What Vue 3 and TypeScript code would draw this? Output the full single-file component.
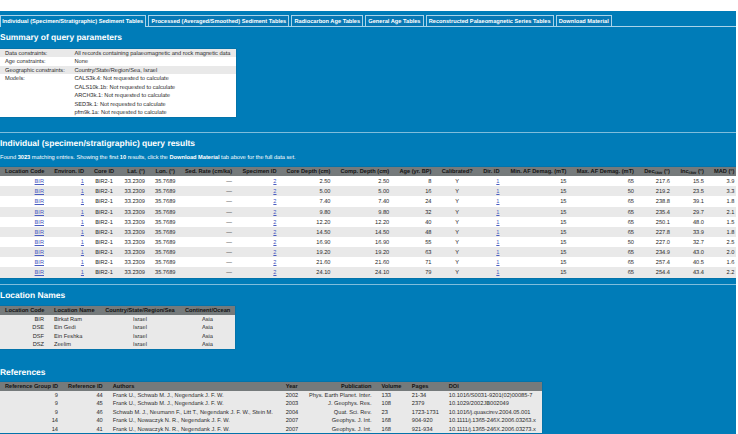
<template>
  <main class="page">
    <nav class="tabs">
      <a
        v-for="tab in tabs"
        :key="tab"
        :class="['tab', { active: tab === activeTab }]"
        href="#"
        @click.prevent="activeTab = tab"
      >{{ tab }}</a>
    </nav>

    <section class="summary">
      <h2>Summary of query parameters</h2>
      <div class="grid summary-table">
        <div v-for="(item, i) in summary" :key="i" class="row">
          <span>{{ item[0] }}</span>
          <span>{{ item[1] }}</span>
        </div>
      </div>
    </section>

    <section class="results">
      <h2>Individual (specimen/stratigraphic) query results</h2>
      <p>
        Found <b>3023</b> matching entries. Showing the first <b>10</b> results, click the
        <b>Download Material</b> tab above for the full data set.
      </p>
      <div class="grid results-table">
        <div class="row head">
          <span v-for="col in resultColumns" :key="col.label" :class="col.align">
            {{ col.label }}<sub v-if="col.sub">{{ col.sub }}</sub>{{ col.unit }}
          </span>
        </div>
        <div v-for="(row, i) in resultRows" :key="i" class="row">
          <span v-for="(value, j) in row" :key="j" :class="resultColumns[j].align">
            <a v-if="resultColumns[j].link" href="#">{{ value }}</a>
            <template v-else>{{ value }}</template>
          </span>
        </div>
      </div>
    </section>

    <section class="locations">
      <h2>Location Names</h2>
      <div class="grid location-table">
        <div class="row head">
          <span v-for="col in locationColumns" :key="col.label" :class="col.align">{{ col.label }}</span>
        </div>
        <div v-for="row in locations" :key="row[0]" class="row">
          <span v-for="(value, j) in row" :key="j" :class="locationColumns[j].align">{{ value }}</span>
        </div>
      </div>
    </section>

    <section class="references">
      <h2>References</h2>
      <div class="grid reference-table">
        <div class="row head">
          <span v-for="col in referenceColumns" :key="col.label" :class="col.align">{{ col.label }}</span>
        </div>
        <div v-for="row in references" :key="row[1]" class="row">
          <span v-for="(value, j) in row" :key="j" :class="referenceColumns[j].align">{{ value }}</span>
        </div>
      </div>
    </section>
  </main>
</template>

<script setup lang="ts">
import { ref } from 'vue'

interface Column {
  label: string
  align: 'left' | 'right' | 'center'
  sub?: string
  unit?: string
  link?: boolean
}

const tabs = [
  'Individual (Specimen/Stratigraphic) Sediment Tables',
  'Processed (Averaged/Smoothed) Sediment Tables',
  'Radiocarbon Age Tables',
  'General Age Tables',
  'Reconstructed Palaeomagnetic Series Tables',
  'Download Material',
]
const activeTab = ref(tabs[0])

const summary = [
  ['Data constraints:', 'All records containing palaeomagnetic and rock magnetic data'],
  ['Age constraints:', 'None'],
  ['Geographic constraints:', 'Country/State/Region/Sea, Israel'],
  ['Models:', 'CALS3k.4: Not requested to calculate'],
  ['', 'CALS10k.1b: Not requested to calculate'],
  ['', 'ARCH3k.1: Not requested to calculate'],
  ['', 'SED3k.1: Not requested to calculate'],
  ['', 'pfm9k.1a: Not requested to calculate'],
]

const resultColumns: Column[] = [
  { label: 'Location Code', align: 'right', link: true },
  { label: 'Environ. ID', align: 'right', link: true },
  { label: 'Core ID', align: 'center' },
  { label: 'Lat. (°)', align: 'right' },
  { label: 'Lon. (°)', align: 'right' },
  { label: 'Sed. Rate (cm/ka)', align: 'right' },
  { label: 'Specimen ID', align: 'right', link: true },
  { label: 'Core Depth (cm)', align: 'right' },
  { label: 'Comp. Depth (cm)', align: 'right' },
  { label: 'Age (yr. BP)', align: 'right' },
  { label: 'Calibrated?', align: 'center' },
  { label: 'Dir. ID', align: 'right', link: true },
  { label: 'Min. AF Demag. (mT)', align: 'right' },
  { label: 'Max. AF Demag. (mT)', align: 'right' },
  { label: 'Dec', sub: 'raw', unit: ' (°)', align: 'right' },
  { label: 'Inc', sub: 'raw', unit: ' (°)', align: 'right' },
  { label: 'MAD (°)', align: 'right' },
]

// depth, age, max. demagnetisation, declination, inclination, MAD
const measurements = [
  ['2.50', '8', '65', '217.6', '15.5', '3.9'],
  ['5.00', '16', '50', '219.2', '23.5', '3.3'],
  ['7.40', '24', '65', '238.8', '39.1', '1.8'],
  ['9.80', '32', '65', '235.4', '29.7', '2.1'],
  ['12.20', '40', '65', '250.1', '48.0', '1.5'],
  ['14.50', '48', '65', '227.8', '33.9', '1.8'],
  ['16.90', '55', '50', '227.0', '32.7', '2.5'],
  ['19.20', '63', '65', '234.9', '43.0', '2.0'],
  ['21.60', '71', '65', '257.4', '40.5', '1.6'],
  ['24.10', '79', '65', '254.4', '43.4', '2.2'],
]

const resultRows = measurements.map(([depth, age, maxAf, dec, inc, mad]) => [
  'BIR', '1', 'BIR2-1', '33.2309', '35.7689', '—', '2',
  depth, depth, age, 'Y', '1', '15', maxAf, dec, inc, mad,
])

const locationColumns: Column[] = [
  { label: 'Location Code', align: 'right' },
  { label: 'Location Name', align: 'left' },
  { label: 'Country/State/Region/Sea', align: 'center' },
  { label: 'Continent/Ocean', align: 'center' },
]

const locations = [
  ['BIR', 'Birkat Ram', 'Israel', 'Asia'],
  ['DSE', 'Ein Gedi', 'Israel', 'Asia'],
  ['DSF', 'Ein Feshka', 'Israel', 'Asia'],
  ['DSZ', 'Zeelim', 'Israel', 'Asia'],
]

const referenceColumns: Column[] = [
  { label: 'Reference Group ID', align: 'right' },
  { label: 'Reference ID', align: 'right' },
  { label: 'Authors', align: 'left' },
  { label: 'Year', align: 'left' },
  { label: 'Publication', align: 'right' },
  { label: 'Volume', align: 'left' },
  { label: 'Pages', align: 'left' },
  { label: 'DOI', align: 'left' },
]

const references = [
  ['9', '44', 'Frank U., Schwab M. J., Negendank J. F. W.', '2002', 'Phys. Earth Planet. Inter.', '133', '21-34', '10.1016/S0031-9201(02)00085-7'],
  ['9', '45', 'Frank U., Schwab M. J., Negendank J. F. W.', '2003', 'J. Geophys. Res.', '108', '2379', '10.1029/2002JB002049'],
  ['9', '46', 'Schwab M. J., Neumann F., Litt T., Negendank J. F. W., Stein M.', '2004', 'Quat. Sci. Rev.', '23', '1723-1731', '10.1016/j.quascirev.2004.05.001'],
  ['14', '40', 'Frank U., Nowaczyk N. R., Negendank J. F. W.', '2007', 'Geophys. J. Int.', '168', '904-920', '10.1111/j.1365-246X.2006.03263.x'],
  ['14', '41', 'Frank U., Nowaczyk N. R., Negendank J. F. W.', '2007', 'Geophys. J. Int.', '168', '921-934', '10.1111/j.1365-246X.2006.03273.x'],
]
</script>

<style>
body {
  margin: 0;
  background: #fff;
}
</style>

<style scoped>
.page {
  box-sizing: border-box;
  width: 736px;
  height: 423px;
  margin-top: 11px;
  padding-top: 4px;
  overflow: hidden;
  background: #007cb8;
  color: #fff;
  font-family: "Liberation Sans", Arial, sans-serif;
  font-size: 5.67px;
  line-height: 8.5px;
  white-space: nowrap;
  text-rendering: geometricPrecision;
}

.tabs {
  display: flex;
  gap: 2px;
  height: 11px;
  border-bottom: 1px solid #a9d3e9;
}

.tab {
  box-sizing: border-box;
  height: 11px;
  padding: 0 2.1px;
  border: 1px solid #a9d3e9;
  border-bottom: none;
  background: #0878b4;
  color: #fff;
  font-weight: bold;
  line-height: 12.6px;
  text-decoration: none;
}

.tab.active {
  height: 12px;
  background: #007cb8;
}

.tab:first-child {
  padding-left: 1.2px;
}

h2 {
  margin: 0;
  font-size: 8.45px;
  font-weight: bold;
  line-height: 12px;
}

p {
  margin: 5px 0 4.2px;
}

.summary {
  height: 101px;
  padding-top: 4px;
}

.results {
  height: 147px;
  padding-top: 4px;
  border-top: 1px solid #7fbddc;
}

.locations {
  height: 71.5px;
  padding-top: 4px;
  border-top: 1px solid #7fbddc;
}

.references {
  padding-top: 5px;
}

.grid {
  width: max-content;
  background: #e9e9e9;
  color: #2b2b2b;
  box-shadow: 0 0 1px #124a68;
}

.summary-table {
  margin-top: 5.6px;
}

.results-table {
  background: #fff;
}

.location-table {
  margin-top: 4.7px;
}

.reference-table {
  margin-top: 4px;
}

.row {
  display: grid;
  height: 8.55px;
  line-height: 11px;
}

.row > span {
  padding: 0 5px;
}

.summary-table .row {
  grid-template-columns: 69.5px 166.5px;
  background: #fff;
}

.summary-table .row:nth-child(-n + 3):nth-child(odd) {
  background: #e9e9e9;
}

.results-table .row {
  grid-template-columns:
    49px 40px 30px 31px 30px 57px 44.5px 54px 58.7px 42.3px
    41.5px 26.5px 67px 67.5px 36px 34px 27px;
  height: 10.15px;
  line-height: 12.9px;
}

.results-table .row:nth-child(odd) {
  background: #e9e9e9;
}

.results-table .row > span:last-child {
  padding: 0 1.5px 0 0;
}

.location-table .row {
  grid-template-columns: 49px 51px 80px 55px;
}

.reference-table .row {
  grid-template-columns: 63px 44.7px 173px 22.5px 73.3px 30.3px 37px 98.7px;
}

.grid .row.head {
  background: #757a7b;
  color: #151515;
  font-weight: bold;
}

.results-table .row.head {
  height: 9.5px;
  line-height: 11.5px;
}

.location-table .row.head,
.reference-table .row.head {
  height: 9px;
  line-height: 11px;
}

.left {
  text-align: left;
}

.right {
  text-align: right;
}

.center {
  text-align: center;
}

.grid a {
  color: #4a5cc0;
}

sub {
  font-size: 4.5px;
  line-height: 0;
  vertical-align: -1px;
}
</style>
